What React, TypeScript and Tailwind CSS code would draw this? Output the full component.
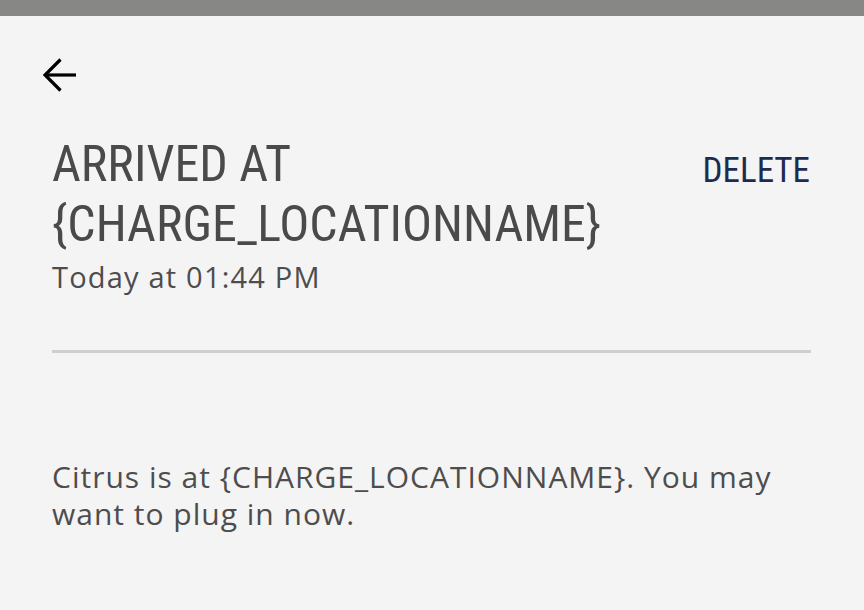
import React from "react";

export default function App() {
  return (
    <div className="w-[864px] h-[610px] bg-[#f4f4f4] overflow-hidden flex flex-col">
      <div className="h-4 w-full bg-[#878886]" />
      <div className="pl-[42px] pt-[42px]">
        <svg width="34" height="34" viewBox="0 0 34 34" fill="none" stroke="#000" strokeWidth="3.2">
          <path d="M34 17H3" />
          <path d="M18.5 1.5L3 17l15.5 15.5" />
        </svg>
      </div>
      <div className="px-[52px] flex flex-col">
        <div className="flex justify-between items-start mt-[42px]">
          <div className="font-['Roboto',sans-serif] font-stretch-condensed text-[50px] leading-[60px] text-[#4a4a4a]">
            ARRIVED AT
            <br />
            {"{CHARGE_LOCATIONNAME}"}
          </div>
          <div className="font-['Roboto',sans-serif] font-stretch-condensed text-[35px] leading-[40px] text-[#1d2b4f] mt-[17px] mr-[2px]">
            DELETE
          </div>
        </div>
        <div className="font-['Open_Sans',sans-serif] text-[29px] leading-[36px] tracking-[1.2px] text-[#4d4d4d] mt-[5px]">
          Today at 01:44 PM
        </div>
        <div className="h-[3px] bg-[#cfcfcf] mt-[55px] w-[759px]" />
        <div className="font-['Open_Sans',sans-serif] text-[30px] leading-[37px] tracking-[1px] text-[#4d4d4d] mt-[105px] w-[780px]">
          Citrus is at {"{CHARGE_LOCATIONNAME}"}. You may
          <br />
          want to plug in now.
        </div>
      </div>
    </div>
  );
}
